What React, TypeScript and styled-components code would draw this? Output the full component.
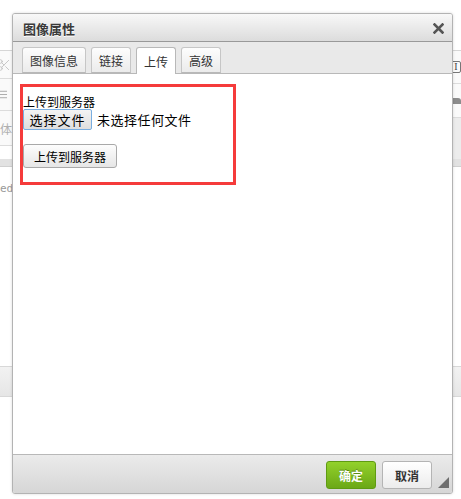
import styled, { createGlobalStyle } from 'styled-components'
import { Scissors, AlignJustify } from 'lucide-react'

const GlobalStyle = createGlobalStyle`
  html, body {
    margin: 0;
    padding: 0;
    background: #fff;
  }
  body {
    font-family: "Noto Sans CJK SC", "Liberation Sans", sans-serif;
  }
  * {
    box-sizing: border-box;
  }
`

const tabs = ['图像信息', '链接', '上传', '高级']

const App = () => {
  return (
    <Page>
      <GlobalStyle />
      {/* editor behind the dialog, only its edges show */}
      <Editor>
        <Toolbar>
          <ToolColumn>
            <ToolRow $height={28}>
              <Scissors size={14} color="#c4c4c4" strokeWidth={1.6} />
            </ToolRow>
            <ToolRow $height={32}>
              <AlignJustify size={11} color="#8a8a8a" strokeWidth={1.5} />
            </ToolRow>
            <ToolRow $height={35}>
              <GhostChar>体</GhostChar>
            </ToolRow>
          </ToolColumn>
          <ToolColumn $right>
            <ToolRow $height={33}>
              <BoxIcon>I</BoxIcon>
            </ToolRow>
            <ToolRow $height={34}>
              <DarkShape />
            </ToolRow>
            <GrayRow />
          </ToolColumn>
        </Toolbar>
        <Band />
        <EditorBody>
          <CodeText>ed</CodeText>
        </EditorBody>
        <StatusBar />
      </Editor>

      <Dialog>
        <TitleBar>
          <Title>图像属性</Title>
          <CloseButton>
            <svg width="11" height="11" viewBox="0 0 11 11">
              <path d="M1.5 1.5 L9.5 9.5 M9.5 1.5 L1.5 9.5" stroke="#555" strokeWidth="2.6" strokeLinecap="square" />
            </svg>
          </CloseButton>
        </TitleBar>
        <TabBar>
          {tabs.map((tab) => (
            <Tab key={tab} $active={tab === '上传'}>
              {tab}
            </Tab>
          ))}
        </TabBar>
        <DialogBody>
          <UploadBox>
            <FieldLabel>上传到服务器</FieldLabel>
            <FileRow>
              <ChooseButton>选择文件</ChooseButton>
              <FileName>未选择任何文件</FileName>
            </FileRow>
            <UploadButton>上传到服务器</UploadButton>
          </UploadBox>
        </DialogBody>
        <Footer>
          <OkButton>确定</OkButton>
          <CancelButton>取消</CancelButton>
          <ResizeGrip />
        </Footer>
      </Dialog>
    </Page>
  )
}

export default App

const Page = styled.div`
  position: relative;
  width: 461px;
  height: 499px;
  overflow: hidden;
  padding-top: 50px;
`

const Editor = styled.div`
  display: flex;
  flex-direction: column;
`

const Toolbar = styled.div`
  display: flex;
  justify-content: space-between;
  border-top: 1px solid #d6d6d6;
`

const ToolColumn = styled.div<{ $right?: boolean }>`
  display: flex;
  flex-direction: column;
  width: 40px;
  align-items: ${(p) => (p.$right ? 'flex-end' : 'flex-start')};
`

const ToolRow = styled.div<{ $height: number }>`
  width: 100%;
  height: ${(p) => p.$height}px;
  display: flex;
  align-items: center;
  padding: 0 2px 0 0;
  justify-content: inherit;
  border-bottom: 1px solid #dcdcdc;
  background: #fafafa;

  svg {
    margin-left: -3px;
  }
`

const GhostChar = styled.span`
  font-size: 12px;
  color: #b0b0b0;
`

const BoxIcon = styled.span`
  width: 10px;
  height: 12px;
  border: 1px solid #777;
  border-radius: 2px;
  font-family: "Liberation Serif", serif;
  font-size: 10px;
  line-height: 10px;
  text-align: center;
  color: #444;
  margin-left: auto;
  margin-right: -2px;
`

const DarkShape = styled.span`
  width: 10px;
  height: 6px;
  background: #8c8c8c;
  margin-left: auto;
  margin-right: -2px;
  border-radius: 1px 3px 0 0;
`

const GrayRow = styled.div`
  width: 100%;
  height: 41px;
  background: #ececec;
`

const Band = styled.div`
  height: 8px;
  background: #e2e2e2;
  border-bottom: 1px solid #d0d0d0;
`

const EditorBody = styled.div`
  height: 199px;
  padding-top: 15px;
`

const CodeText = styled.div`
  font-family: "DejaVu Sans Mono", "Liberation Mono", monospace;
  font-size: 11px;
  color: #999;
`

const StatusBar = styled.div`
  height: 31px;
  background: linear-gradient(#f2f2f2, #e6e6e6);
  border-top: 1px solid #d8d8d8;
  border-bottom: 1px solid #d8d8d8;
`

const Dialog = styled.div`
  position: absolute;
  left: 12px;
  top: 13px;
  width: 441px;
  height: 481px;
  display: flex;
  flex-direction: column;
  background: #fff;
  border: 1px solid #b3b3b3;
  border-radius: 3px;
  box-shadow: 0 0 3px rgba(0, 0, 0, 0.15);
  overflow: hidden;
`

const TitleBar = styled.div`
  height: 28px;
  flex-shrink: 0;
  display: flex;
  align-items: center;
  justify-content: space-between;
  padding: 1px 6px 0 10px;
  background: linear-gradient(#f8f8f8, #dcdcdc);
  border-bottom: 1px solid #999;
`

const Title = styled.span`
  font-size: 13px;
  font-weight: bold;
  color: #3a3a3a;
  text-shadow: 0 1px 0 #fff;
`

const CloseButton = styled.span`
  display: flex;
  align-items: center;
  padding: 0 2px;
`

const TabBar = styled.div`
  height: 32px;
  flex-shrink: 0;
  display: flex;
  align-items: flex-end;
  gap: 5px;
  padding-left: 9px;
  background: #e9e9e9;
  border-bottom: 1px solid #b8b8b8;
`

const Tab = styled.div<{ $active?: boolean }>`
  height: ${(p) => (p.$active ? 27 : 26)}px;
  margin-bottom: ${(p) => (p.$active ? -1 : 0)}px;
  padding: 0 7px;
  display: flex;
  align-items: center;
  font-size: 12px;
  color: #333;
  border: 1px solid ${(p) => (p.$active ? '#b8b8b8' : '#c6c6c6')};
  border-bottom: ${(p) => (p.$active ? 'none' : '1px solid #b8b8b8')};
  border-radius: 3px 3px 0 0;
  background: ${(p) => (p.$active ? '#fff' : 'linear-gradient(#fdfdfd, #ebebeb)')};
`

const DialogBody = styled.div`
  flex: 1;
  padding: 10px 0 0 7px;
  background: #fff;
`

const UploadBox = styled.div`
  width: 216px;
  height: 101px;
  border: 3px solid #f53b3b;
  padding: 8px 0 0 0;
  display: flex;
  flex-direction: column;
  align-items: flex-start;
`

const FieldLabel = styled.div`
  font-size: 12px;
  line-height: 14px;
  color: #000;
`

const FileRow = styled.div`
  display: flex;
  align-items: center;
  gap: 5px;
`

const ChooseButton = styled.button`
  width: 69px;
  height: 21px;
  padding: 0;
  font-family: inherit;
  font-size: 13px;
  letter-spacing: 1px;
  color: #000;
  border: 1px solid #7aaee0;
  border-radius: 2px;
  background: linear-gradient(#f4f4f4, #dedede);
`

const FileName = styled.span`
  font-size: 13px;
  letter-spacing: 0.5px;
  color: #000;
`

const UploadButton = styled.button`
  width: 94px;
  height: 24px;
  margin-top: 14px;
  padding: 0;
  font-family: inherit;
  font-size: 12px;
  color: #000;
  border: 1px solid #a9a9a9;
  border-radius: 3px;
  background: linear-gradient(#fdfdfd, #e6e6e6);
`

const Footer = styled.div`
  position: relative;
  height: 39px;
  flex-shrink: 0;
  display: flex;
  justify-content: flex-end;
  align-items: flex-start;
  gap: 6px;
  padding: 6px 20px 0 0;
  background: linear-gradient(#ebebeb, #d6d6d6);
  border-top: 1px solid #b8b8b8;
`

const FooterButton = styled.div`
  width: 50px;
  height: 28px;
  display: flex;
  align-items: center;
  justify-content: center;
  font-size: 12px;
  font-weight: bold;
  border-radius: 3px;
`

const OkButton = styled(FooterButton)`
  color: #fff;
  background: linear-gradient(#92d12b, #6ba816);
  border: 1px solid #5f9b12;
  text-shadow: 0 -1px 0 #5a8d14;
`

const CancelButton = styled(FooterButton)`
  color: #333;
  background: linear-gradient(#ffffff, #ececec);
  border: 1px solid #b4b4b4;
`

const ResizeGrip = styled.span`
  position: absolute;
  right: 3px;
  bottom: 5px;
  width: 0;
  height: 0;
  border-style: solid;
  border-width: 0 0 11px 11px;
  border-color: transparent transparent #6e6e6e transparent;
`
